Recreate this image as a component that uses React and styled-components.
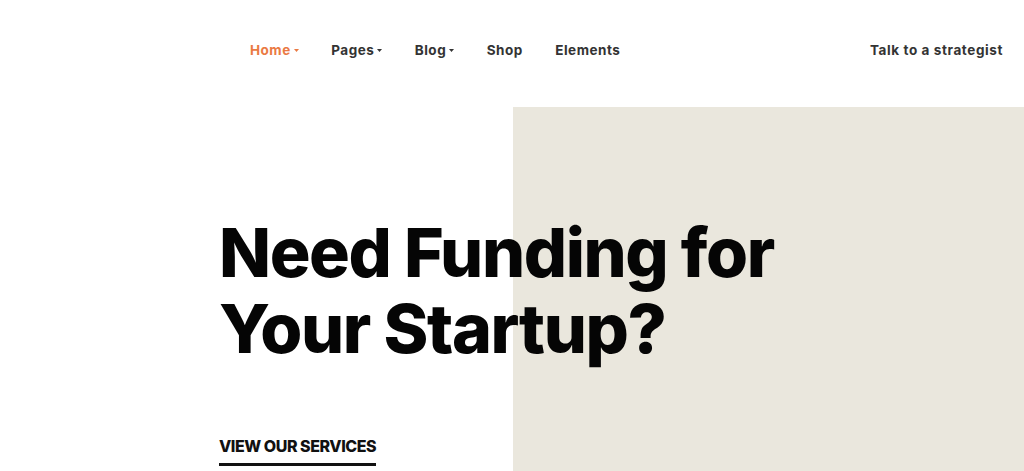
import styled, { createGlobalStyle } from "styled-components";

const GlobalStyle = createGlobalStyle`
  html, body {
    margin: 0;
    padding: 0;
    background: #fff;
  }
  body {
    font-family: Inter, "Liberation Sans", Arial, sans-serif;
    -webkit-font-smoothing: antialiased;
  }
`;

const Page = styled.div`
  width: 100%;
  height: 471px;
  overflow: hidden;
  display: flex;
  flex-direction: column;
`;

const Header = styled.header`
  height: 107px;
  box-sizing: border-box;
  padding: 41px 21px 0 250px;
  display: flex;
  justify-content: space-between;
  align-items: flex-start;
`;

const Nav = styled.nav`
  display: flex;
  gap: 32.5px;
`;

const NavItem = styled.a`
  display: flex;
  align-items: center;
  gap: 3px;
  font-size: 13.5px;
  font-weight: 700;
  line-height: 18px;
  letter-spacing: ${(p) => p.$spacing || "0.5px"};
  color: ${(p) => (p.$active ? "#ea7a43" : "#333333")};
  text-decoration: none;
  cursor: pointer;
`;

const Caret = styled.svg`
  width: 5px;
  height: 3px;
  margin-top: 1px;
  fill: currentColor;
`;

const CtaLink = styled(NavItem)`
  color: #333333;
`;

const Hero = styled.section`
  flex: 1;
  background: linear-gradient(to right, #ffffff 513px, #eae7dd 513px);
  padding: 107px 0 0 219px;
  display: flex;
  flex-direction: column;
  align-items: flex-start;
`;

const Title = styled.h1`
  margin: 0;
  font-size: 68px;
  line-height: 76px;
  font-weight: 800;
  letter-spacing: -1.4px;
  color: #050505;
`;

const ServicesLink = styled.a`
  margin-top: 70px;
  font-size: 16px;
  font-weight: 800;
  line-height: 20px;
  letter-spacing: -0.45px;
  color: #111;
  text-decoration: none;
  padding-bottom: 7px;
  border-bottom: 3px solid #111;
`;

const DropCaret = () => (
  <Caret viewBox="0 0 5 3">
    <path d="M0 0h5L2.5 3z" />
  </Caret>
);

const navItems = [
  { label: "Home", caret: true, active: true },
  { label: "Pages", caret: true },
  { label: "Blog", caret: true },
  { label: "Shop" },
  { label: "Elements" },
];

export default function App() {
  return (
    <Page>
      <GlobalStyle />
      <Header>
        <Nav>
          {navItems.map((item) => (
            <NavItem key={item.label} $active={item.active}>
              {item.label}
              {item.caret && <DropCaret />}
            </NavItem>
          ))}
        </Nav>
        <CtaLink $spacing="0.6px">Talk to a strategist</CtaLink>
      </Header>
      <Hero>
        <Title>
          Need Funding for
          <br />
          Your Startup?
        </Title>
        <ServicesLink>VIEW OUR SERVICES</ServicesLink>
      </Hero>
    </Page>
  );
}
